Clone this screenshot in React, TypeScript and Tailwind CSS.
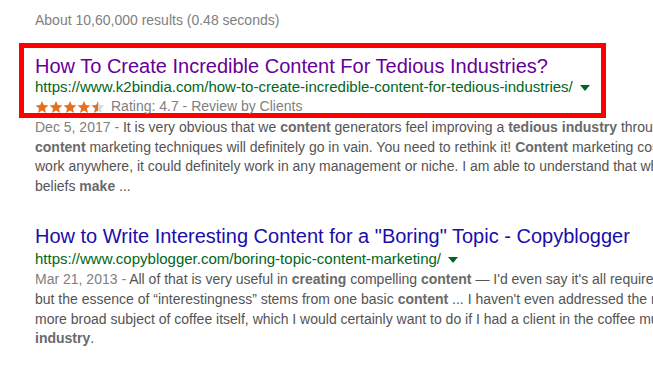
import React from "react";

const STAR = "M12 1.5l3.1 7.2 7.9.7-6 5.2 1.8 7.7L12 18.2 5.2 22.3 7 14.6 1 9.4l7.9-.7z";

function Stars() {
  return (
    <span className="inline-flex items-center mr-[6px]">
      {[0, 1, 2, 3].map((i) => (
        <svg key={i} width="14" height="14" viewBox="0 0 24 24">
          <path d={STAR} fill="#e7711b" />
        </svg>
      ))}
      <svg width="14" height="14" viewBox="0 0 24 24">
        <defs>
          <clipPath id="half">
            <rect x="0" y="0" width="12" height="24" />
          </clipPath>
        </defs>
        <path d={STAR} fill="#d9d9d9" />
        <path d={STAR} fill="#e7711b" clipPath="url(#half)" />
      </svg>
    </span>
  );
}

function Caret() {
  return <span className="inline-block ml-[7px] align-middle w-0 h-0 border-l-[5px] border-r-[5px] border-t-[6px] border-l-transparent border-r-transparent border-t-[#006621]" />;
}

const B = ({ children }: { children: React.ReactNode }) => <b className="font-bold text-[#6a6a6a]">{children}</b>;

export default function App() {
  return (
    <div className="w-[653px] h-[367px] overflow-hidden bg-white font-['Liberation_Sans',Arial,sans-serif]">
      <div className="pt-[10px] pl-[35px] text-[14px] leading-[20px] text-[#808080] whitespace-nowrap">
        About 10,60,000 results (0.48 seconds)
      </div>

      <div className="mt-[13px] ml-[19px] w-[587px] h-[75px] border-[5px] border-[#ff0000] pl-[11px] pt-[7px] whitespace-nowrap">
        <div className="text-[20px] leading-[22px] text-[#660099]">How To Create Incredible Content For Tedious Industries?</div>
        <div className="text-[15px] leading-[20px] text-[#006621]">
          https://www.k2bindia.com/how-to-create-incredible-content-for-tedious-industries/
          <Caret />
        </div>
        <div className="flex items-center text-[14px] leading-[19px] text-[#808080]">
          <Stars />
          Rating: 4.7 - Review by Clients
        </div>
      </div>

      <div className="pl-[35px] text-[14px] leading-[19.6px] text-[#545454] whitespace-nowrap">
        <div>
          <span className="text-[#808080]">Dec 5, 2017 - </span>It is very obvious that we <B>content</B> generators feel improving a <B>tedious industry</B> through
        </div>
        <div>
          <B>content</B> marketing techniques will definitely go in vain. You need to rethink it! <B>Content</B> marketing could
        </div>
        <div>work anywhere, it could definitely work in any management or niche. I am able to understand that what</div>
        <div>
          beliefs <B>make</B> ...
        </div>
      </div>

      <div className="mt-[29px] pl-[35px] whitespace-nowrap">
        <div className="text-[20px] leading-[23px] text-[#1a0dab]">How to Write Interesting Content for a "Boring" Topic - Copyblogger</div>
        <div className="text-[15px] leading-[22px] text-[#006621]">
          https://www.copyblogger.com/boring-topic-content-marketing/
          <Caret />
        </div>
        <div className="text-[14px] leading-[19.6px] text-[#545454]">
          <div>
            <span className="text-[#808080]">Mar 21, 2013 - </span>All of that is very useful in <B>creating</B> compelling <B>content</B> — I'd even say it's all required
          </div>
          <div>
            but the essence of “interestingness” stems from one basic <B>content</B> ... I haven't even addressed the more
          </div>
          <div>more broad subject of coffee itself, which I would certainly want to do if I had a client in the coffee must</div>
          <div>
            <B>industry</B>.
          </div>
        </div>
      </div>
    </div>
  );
}
